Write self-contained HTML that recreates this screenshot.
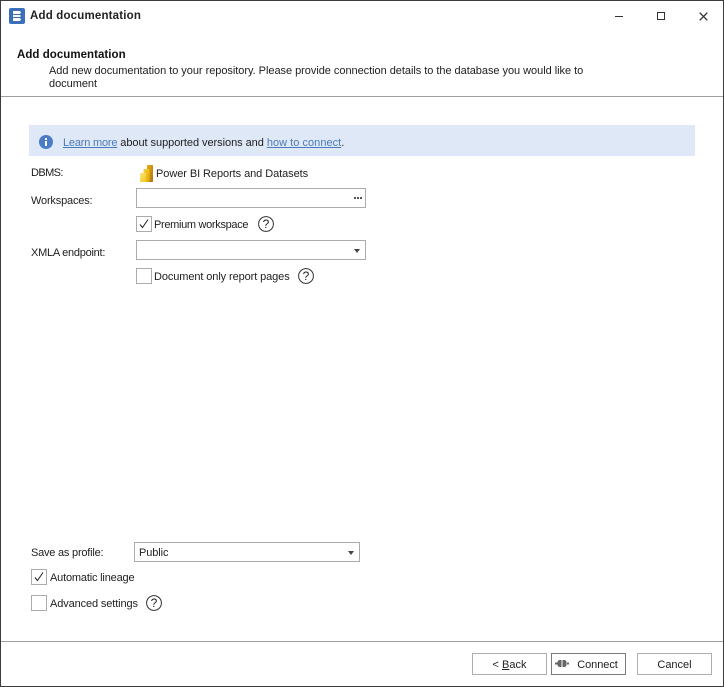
<!DOCTYPE html>
<html><head><meta charset="utf-8"><style>
html,body{margin:0;padding:0;background:#fff}
body{width:724px;height:687px;position:relative;overflow:hidden;font-family:"Liberation Sans",sans-serif;font-size:11px;color:#1e1e1e}
.t{position:absolute;white-space:nowrap;line-height:14px}
.b{position:absolute;box-sizing:border-box;border:1px solid #ababab;background:#fff}
.l{position:absolute}
a{color:#4a7ab8;text-decoration:underline}
.btn{position:absolute;box-sizing:border-box;height:22px;border:1px solid #adadad;text-align:center;line-height:22px;background:#fff;font-size:11px}
.q{position:absolute;width:16px;text-align:center;font-size:12px;line-height:14px;color:#222}
svg{position:absolute;overflow:visible}
</style></head><body>
<div class="l" style="left:0;top:0;width:724px;height:687px;box-sizing:border-box;border:1px solid #3c3c3c"></div>

<svg style="left:9px;top:8px" width="16" height="16" viewBox="0 0 16 16"><rect width="16" height="16" rx="2" fill="#3d6fb8"/><path d="M4 3h7l1 1.5-1 1.500H4zM4 7h7l1 1-1 1H4zM4 10h7l1 1.500-1 1.500H4z" fill="#fff"/></svg>
<div class="t" style="left:30px;top:9px;font-weight:bold;font-size:11.5px;color:#222;letter-spacing:.18px">Add documentation</div>

<div class="l" style="left:615px;top:16px;width:8px;height:1px;background:#333"></div>
<div class="l" style="left:657px;top:12px;width:6px;height:6px;border:1px solid #333"></div>
<svg style="left:699px;top:12px" width="10" height="10" viewBox="0 0 10 10"><path d="M.7.7l7.600 7.600M8.300.7L.7 8.300" stroke="#333" stroke-width="1.300" fill="none"/></svg>

<div class="t" style="left:17px;top:48px;font-weight:bold;font-size:11.5px;color:#111;letter-spacing:.04px">Add documentation</div>
<div class="t" style="left:49px;top:64px;letter-spacing:-.04px">Add new documentation to your repository. Please provide connection details to the database you would like to</div>
<div class="t" style="left:49px;top:77px;letter-spacing:-.04px">document</div>
<div class="l" style="left:1px;top:96px;width:722px;height:1px;background:#a0a0a0"></div>

<div class="l" style="left:29px;top:125px;width:666px;height:31px;background:#dfe8f6"></div>
<svg style="left:39px;top:135px" width="14" height="14" viewBox="0 0 14 14"><circle cx="7" cy="7" r="7" fill="#4a7cc7"/><rect x="6" y="6" width="2" height="5" fill="#fff"/><rect x="6" y="3" width="2" height="2" fill="#fff"/></svg>
<div class="t" style="left:63px;top:136px;letter-spacing:-.05px"><a style="letter-spacing:-.2px">Learn more</a> about supported versions and <a style="letter-spacing:.03px">how to connect</a>.</div>

<div class="t" style="left:31px;top:166px;letter-spacing:-.6px">DBMS:</div>
<svg style="left:140px;top:165px" width="13" height="17" viewBox="0 0 13 17"><defs><linearGradient id="g1" x1="0" x2="1" y1="0" y2="1"><stop offset="0" stop-color="#fbe58a"/><stop offset="1" stop-color="#f2c811"/></linearGradient><linearGradient id="g2" x1="0" x2="1" y1="0" y2="1"><stop offset="0" stop-color="#f6d23a"/><stop offset="1" stop-color="#e0a90c"/></linearGradient><linearGradient id="g3" x1="0" x2="1" y1="0" y2="1"><stop offset="0" stop-color="#e8b010"/><stop offset="1" stop-color="#b4700a"/></linearGradient></defs><rect x="7" y="0" width="6" height="17" rx=".6" fill="url(#g3)"/><rect x="3.500" y="4" width="6" height="13" rx=".6" fill="url(#g2)"/><rect x="0" y="8" width="6" height="9" rx=".6" fill="url(#g1)"/></svg>
<div class="t" style="left:156px;top:167px;letter-spacing:-.07px">Power BI Reports and Datasets</div>

<div class="t" style="left:31px;top:194px;letter-spacing:-.18px">Workspaces:</div>
<div class="b" style="left:136px;top:188px;width:230px;height:20px"></div>
<div class="l" style="left:354px;top:197px;width:2px;height:2px;background:#555;box-shadow:3px 0 #555,6px 0 #555"></div>

<div class="b" style="left:136px;top:216px;width:16px;height:16px"></div>
<svg style="left:139px;top:219px" width="10" height="10" viewBox="0 0 10 10"><path d="M1 5.500l2.500 3L9 .5" stroke="#222" stroke-width="1" fill="none"/></svg>
<div class="t" style="left:154px;top:218px;letter-spacing:-.32px">Premium workspace</div>
<svg style="left:258px;top:216px" width="16" height="16" viewBox="0 0 16 16"><circle cx="8" cy="8" r="7.400" fill="none" stroke="#333"/></svg>
<div class="q" style="left:258px;top:217px">?</div>

<div class="t" style="left:31px;top:246px;letter-spacing:-.25px">XMLA endpoint:</div>
<div class="b" style="left:136px;top:240px;width:230px;height:20px"></div>
<div class="l" style="left:354px;top:249px;width:0;height:0;border-left:3.500px solid transparent;border-right:3.500px solid transparent;border-top:4px solid #444"></div>

<div class="b" style="left:136px;top:268px;width:16px;height:16px"></div>
<div class="t" style="left:154px;top:270px;letter-spacing:-.1px">Document only report pages</div>
<svg style="left:298px;top:268px" width="16" height="16" viewBox="0 0 16 16"><circle cx="8" cy="8" r="7.400" fill="none" stroke="#333"/></svg>
<div class="q" style="left:298px;top:269px">?</div>

<div class="t" style="left:31px;top:546px;letter-spacing:-.22px">Save as profile:</div>
<div class="b" style="left:134px;top:542px;width:226px;height:20px"></div>
<div class="t" style="left:139px;top:546px;letter-spacing:-.1px">Public</div>
<div class="l" style="left:348px;top:551px;width:0;height:0;border-left:3.500px solid transparent;border-right:3.500px solid transparent;border-top:4px solid #444"></div>

<div class="b" style="left:31px;top:569px;width:16px;height:16px"></div>
<svg style="left:34px;top:572px" width="10" height="10" viewBox="0 0 10 10"><path d="M1 5.500l2.500 3L9 .5" stroke="#222" stroke-width="1" fill="none"/></svg>
<div class="t" style="left:50px;top:571px;letter-spacing:-.18px">Automatic lineage</div>

<div class="b" style="left:31px;top:595px;width:16px;height:16px"></div>
<div class="t" style="left:50px;top:597px;letter-spacing:-.12px">Advanced settings</div>
<svg style="left:146px;top:595px" width="16" height="16" viewBox="0 0 16 16"><circle cx="8" cy="8" r="7.400" fill="none" stroke="#333"/></svg>
<div class="q" style="left:146px;top:596px">?</div>

<div class="l" style="left:1px;top:641px;width:722px;height:1px;background:#a0a0a0"></div>
<div class="btn" style="left:472px;top:653px;width:75px">&lt; <u>B</u>ack</div>
<div class="btn" style="left:551px;top:653px;width:75px;border-color:#7a7a7a;padding-left:18px;letter-spacing:-.05px">Connect</div>
<svg style="left:555px;top:660px" width="14" height="7" viewBox="0 0 14 7"><path d="M0 2.500h3v2H0zM11 2.500h3v2h-3zM2.500 1.500L4 0h2.500v7H4L2.500 5.500zM11.500 1.500L10 0H7.500v7H10l1.500-1.500z" fill="#666"/></svg>
<div class="btn" style="left:637px;top:653px;width:75px">Cancel</div>
</body></html>
